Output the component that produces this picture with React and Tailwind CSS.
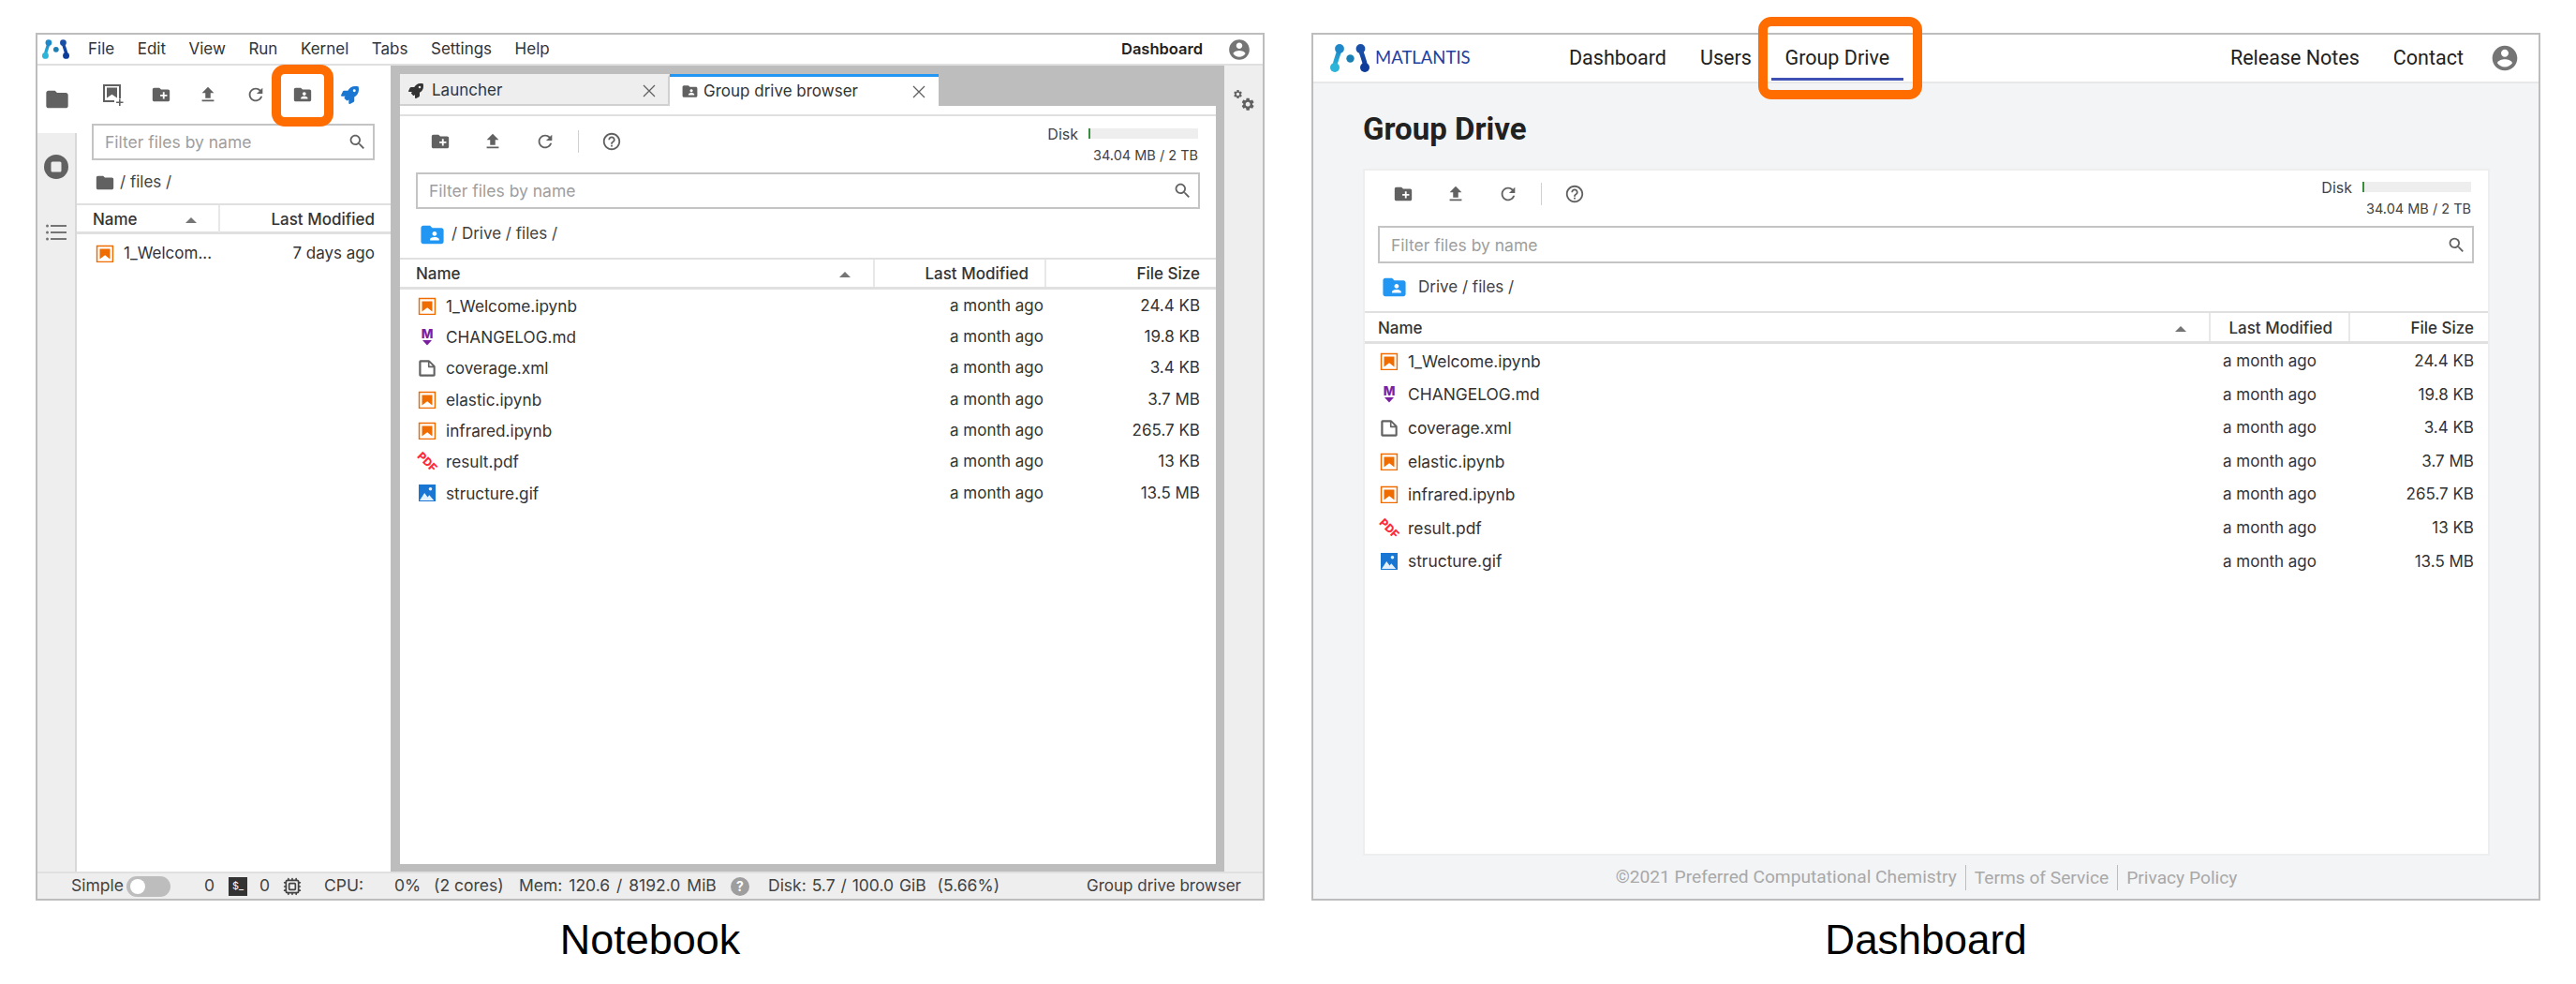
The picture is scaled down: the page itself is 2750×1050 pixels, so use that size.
import React from "react";
import { Cpu } from "lucide-react";
import { FaRocket } from "react-icons/fa";

const P = {
  folder: "M10 4H4c-1.1 0-1.99.9-1.99 2L2 18c0 1.1.9 2 2 2h16c1.1 0 2-.9 2-2V8c0-1.1-.9-2-2-2h-8l-2-2z",
  newFolder: "M20 6h-8l-2-2H4c-1.11 0-1.99.89-1.99 2L2 18c0 1.11.89 2 2 2h16c1.11 0 2-.89 2-2V8c0-1.11-.89-2-2-2zm-1 8h-3v3h-2v-3h-3v-2h3V9h2v3h3v2z",
  upload: "M9 16h6v-6h4l-7-7-7 7h4zm-4 2h14v2H5z",
  refresh: "M17.65 6.35C16.2 4.9 14.21 4 12 4c-4.42 0-7.99 3.58-7.99 8s3.57 8 7.99 8c3.73 0 6.84-2.55 7.73-6h-2.08c-.82 2.33-3.04 4-5.65 4-3.31 0-6-2.69-6-6s2.69-6 6-6c1.66 0 3.14.69 4.22 1.78L13 11h7V4l-2.35 2.35z",
  shared: "M20 6h-8l-2-2H4c-1.1 0-2 .9-2 2v12c0 1.1.9 2 2 2h16c1.1 0 2-.9 2-2V8c0-1.1-.9-2-2-2zm-6 3c1.1 0 2 .9 2 2s-.9 2-2 2-2-.9-2-2 .9-2 2-2zm4 8h-8v-1c0-1.33 2.67-2 4-2s4 .67 4 2v1z",
  search: "M15.5 14h-.79l-.28-.27C15.41 12.59 16 11.11 16 9.5 16 5.91 13.09 3 9.5 3S3 5.91 3 9.5 5.91 16 9.5 16c1.61 0 3.09-.59 4.23-1.57l.27.28v.79l5 4.99L20.49 19l-4.99-5zm-6 0C7.01 14 5 11.99 5 9.5S7.01 5 9.5 5 14 7.01 14 9.5 11.99 14 9.5 14z",
  help: "M11 18h2v-2h-2v2zm1-16C6.48 2 2 6.48 2 12s4.48 10 10 10 10-4.48 10-10S17.52 2 12 2zm0 18c-4.41 0-8-3.59-8-8s3.59-8 8-8 8 3.59 8 8-3.59 8-8 8zm0-14c-2.21 0-4 1.79-4 4h2c0-1.1.9-2 2-2s2 .9 2 2c0 2-3 1.75-3 5h2c0-2.25 3-2.5 3-5 0-2.21-1.79-4-4-4z",
  account: "M12 2C6.48 2 2 6.48 2 12s4.48 10 10 10 10-4.48 10-10S17.52 2 12 2zm0 3c1.66 0 3 1.34 3 3s-1.34 3-3 3-3-1.34-3-3 1.34-3 3-3zm0 14.2c-2.5 0-4.71-1.28-6-3.22.03-1.99 4-3.08 6-3.08 1.99 0 5.97 1.09 6 3.08-1.29 1.94-3.5 3.22-6 3.22z",
  gear: "M19.14 12.94c.04-.3.06-.61.06-.94 0-.32-.02-.64-.07-.94l2.03-1.58c.18-.14.23-.41.12-.61l-1.92-3.32c-.12-.22-.37-.29-.59-.22l-2.39.96c-.5-.38-1.03-.7-1.62-.94l-.36-2.54c-.04-.24-.24-.41-.48-.41h-3.84c-.24 0-.43.17-.47.41l-.36 2.54c-.59.24-1.13.57-1.62.94l-2.39-.96c-.22-.08-.47 0-.59.22L2.74 8.87c-.12.21-.08.47.12.61l2.03 1.58c-.05.3-.09.63-.09.94s.02.64.07.94l-2.03 1.58c-.18.14-.23.41-.12.61l1.92 3.32c.12.22.37.29.59.22l2.39-.96c.5.38 1.03.7 1.62.94l.36 2.54c.05.24.24.41.48.41h3.84c.24 0 .44-.17.47-.41l.36-2.54c.59-.24 1.13-.56 1.62-.94l2.39.96c.22.08.47 0 .59-.22l1.92-3.32c.12-.22.07-.47-.12-.61l-2.01-1.58zM12 15.6c-1.98 0-3.6-1.62-3.6-3.6s1.62-3.6 3.6-3.6 3.6 1.62 3.6 3.6-1.62 3.6-3.6 3.6z",
};

const Icon = ({ d, className = "w-5 h-5 text-[#616161]" }) => (
  <svg viewBox="0 0 24 24" fill="currentColor" className={className}>
    <path d={d} />
  </svg>
);

const CloseIcon = () => (
  <svg viewBox="0 0 14 14" className="w-[14px] h-[14px] text-[#616161]" stroke="currentColor" strokeWidth="1.3" fill="none">
    <path d="M1 1l12 12M13 1L1 13" />
  </svg>
);

const SortArrow = () => (
  <svg viewBox="0 0 12 6" className="w-[12px] h-[6px] fill-[#757575]">
    <path d="M6 0l6 6H0z" />
  </svg>
);

const Logo = ({ className }) => (
  <svg viewBox="0 0 42 30" className={className}>
    <defs>
      <linearGradient id="logoLeft" x1="0" y1="0" x2="0" y2="1">
        <stop offset="0" stopColor="#1e88c9" />
        <stop offset="1" stopColor="#2cb5d8" />
      </linearGradient>
      <linearGradient id="logoRight" x1="0" y1="0" x2="0" y2="1">
        <stop offset="0" stopColor="#1a4fa8" />
        <stop offset="1" stopColor="#0d3c9a" />
      </linearGradient>
    </defs>
    <path d="M10 5c-.6 7-4.5 10-5 20" stroke="url(#logoLeft)" strokeWidth="5" fill="none" strokeLinecap="round" />
    <circle cx="10" cy="5" r="4.9" fill="#1e88c9" />
    <circle cx="5" cy="25" r="5" fill="#2cb5d8" />
    <circle cx="21.5" cy="15.5" r="4.2" fill="#1b7fb3" />
    <path d="M32.5 5c.6 7 4.5 10 5 20" stroke="url(#logoRight)" strokeWidth="5" fill="none" strokeLinecap="round" />
    <circle cx="32.5" cy="5" r="4.9" fill="#1a4fa8" />
    <circle cx="37" cy="25" r="5" fill="#0d3c9a" />
  </svg>
);

const NotebookIcon = () => (
  <svg viewBox="0 0 22 22" className="w-[22px] h-[22px] fill-[#ef6c00]">
    <path d="M18.7 3.3v15.4H3.3V3.3h15.4m1.5-1.5H1.8v18.3h18.3l.1-18.3z" />
    <path d="M16.5 16.5l-5.4-4.3-5.6 4.3v-11h11z" />
  </svg>
);

const MarkdownIcon = () => (
  <svg viewBox="0 0 22 22" className="w-[22px] h-[22px]">
    <text x="11" y="12" textAnchor="middle" fontSize="13.5" fontWeight="800" fontFamily="Inter, sans-serif" fill="#7b1fa2">M</text>
    <path d="M6 14h10l-5 5.5z" fill="#7b1fa2" />
  </svg>
);

const FileIcon = () => (
  <svg viewBox="0 0 22 22" className="w-[22px] h-[22px] fill-[#616161]">
    <path d="M19.3 8.2l-5.5-5.5c-.3-.3-.7-.5-1.2-.5H3.9c-.8.1-1.6.9-1.6 1.8v14.1c0 .9.7 1.6 1.6 1.6h14.2c.9 0 1.6-.7 1.6-1.6V9.4c.1-.5-.1-.9-.4-1.2zm-5.8-3.3l3.4 3.6h-3.4V5zm3.9 12.7H4.7c-.1 0-.2 0-.2-.2V4.7c0-.2.1-.3.2-.3h7.2v4.4s0 .8.3 1.1c.3.3 1.1.3 1.1.3h4.3v7.2s-.1.2-.2.2z" />
  </svg>
);

const PdfIcon = () => (
  <svg viewBox="0 0 22 22" className="w-[22px] h-[22px] overflow-visible">
    <text x="11" y="15" textAnchor="middle" fontSize="12" fontWeight="800" fontFamily="Inter, sans-serif" fill="#ff2a3a" transform="rotate(45 11 11)">PDF</text>
  </svg>
);

const ImageIcon = () => (
  <svg viewBox="0 0 22 22" className="w-[22px] h-[22px]">
    <rect x="2" y="2" width="18" height="18" fill="#1976d2" />
    <circle cx="14.5" cy="6.8" r="1.8" fill="#e3f2fd" />
    <path d="M3 19l5.2-8 3.3 4.5 1.8-2.2 4.9 5.7z" fill="#e3f2fd" />
  </svg>
);

const LauncherAddIcon = () => (
  <svg viewBox="0 0 24 24" className="w-[24px] h-[24px] fill-[#616161]">
    <path d="M1 1h19v15h-2V3H3v15h10v2H1z" />
    <path d="M5 4.5h11v11l-5.5-3.7L5 15.5z" />
    <path d="M18 16.5h1.6v2.9H22.5V21h-2.9v2.9H18V21h-2.9v-1.6H18z" />
  </svg>
);

const GearsIcon = () => (
  <svg viewBox="0 0 24 24" className="w-[24px] h-[24px] fill-[#616161]">
    <g transform="scale(0.46)">
      <path d={P.gear} />
    </g>
    <g transform="translate(8 8) scale(0.68)">
      <path d={P.gear} />
    </g>
  </svg>
);

const files = [
  { name: "1_Welcome.ipynb", size: "24.4 KB", Ico: NotebookIcon },
  { name: "CHANGELOG.md", size: "19.8 KB", Ico: MarkdownIcon },
  { name: "coverage.xml", size: "3.4 KB", Ico: FileIcon },
  { name: "elastic.ipynb", size: "3.7 MB", Ico: NotebookIcon },
  { name: "infrared.ipynb", size: "265.7 KB", Ico: NotebookIcon },
  { name: "result.pdf", size: "13 KB", Ico: PdfIcon },
  { name: "structure.gif", size: "13.5 MB", Ico: ImageIcon },
];

const FilterBox = ({ className }) => (
  <div className={`flex items-center border-2 border-[#c4c4c4] bg-white ${className}`}>
    <input
      placeholder="Filter files by name"
      className="flex-1 min-w-0 h-full pl-3 outline-none leading-none text-[17.5px] text-[#333] placeholder:text-[#9e9e9e]"
    />
    <Icon d={P.search} className="w-[21px] h-[21px] mr-[6px] text-[#616161]" />
  </div>
);

const DriveBrowser = ({ c, crumb }) => (
  <div className="flex-1 flex flex-col bg-white font-[Inter,sans-serif] text-[#333] min-h-0">
    <div className={`flex justify-between ${c.toolbar}`}>
      <div className={`flex items-center ${c.btn}`}>
        {[P.newFolder, P.upload, P.refresh].map((d) => (
          <div key={d} className="w-14 flex justify-center">
            <Icon d={d} className="w-[22px] h-[22px] text-[#616161]" />
          </div>
        ))}
        <div className="w-px h-6 bg-[#d0d0d0] ml-[7px]" />
        <div className="w-14 flex justify-center ml-[7px]">
          <Icon d={P.help} className="w-[22px] h-[22px] text-[#616161]" />
        </div>
      </div>
      <div className={`flex flex-col items-end ${c.disk}`}>
        <div className="flex items-center gap-[11px] h-[11px]">
          <span className="text-[16px] text-[#424242]">Disk</span>
          <div className={`h-[11px] bg-[#eeeeee] ${c.bar}`}>
            <div className="w-[2px] h-full bg-[#388e3c]" />
          </div>
        </div>
        <span className="text-[14.5px] text-[#424242] mt-[8px] leading-[20px]">34.04 MB / 2 TB</span>
      </div>
    </div>
    <FilterBox className={c.filter} />
    <div className={`flex items-center text-[17px] text-[#424242] ${c.crumb}`}>
      <Icon d={P.shared} className="w-[29px] h-[29px] text-[#2196f3]" />
      <span className={c.crumbText}>{crumb}</span>
    </div>
    <div className={`grid border-t-2 border-b-[3px] border-[#e0e0e0] text-[17px] font-medium ${c.grid} ${c.head}`}>
      <div className={`flex items-center justify-between pr-[24px] pt-[3px] ${c.namePad}`}>
        <span>Name</span>
        <SortArrow />
      </div>
      <div className="flex items-center justify-end border-l-2 border-[#e8e8e8] pr-[17px] pt-[3px]">Last Modified</div>
      <div className={`flex items-center justify-end border-l-2 border-[#e8e8e8] pt-[3px] ${c.sizePad}`}>File Size</div>
    </div>
    {files.map(({ name, size, Ico }) => (
      <div key={name} className={`grid items-center text-[17px] pt-[2px] ${c.grid} ${c.row}`}>
        <div className={`flex items-center ${c.rowName}`}>
          <Ico />
          <span className={c.nameText}>{name}</span>
        </div>
        <div className={`text-right ${c.modPad}`}>a month ago</div>
        <div className={`text-right ${c.sizePad}`}>{size}</div>
      </div>
    ))}
  </div>
);

const nbConfig = {
  toolbar: "h-[60px] pl-[15px] pr-[19px]",
  btn: "h-[54px]",
  disk: "pt-[13px]",
  bar: "w-[117px]",
  filter: "mx-[17px] h-[39px] shrink-0",
  crumb: "h-[52px] pl-[20px] pt-[2px]",
  crumbText: "ml-[6px]",
  grid: "grid-cols-[505px_183px_183px]",
  head: "h-[34px]",
  row: "h-[33.3px]",
  namePad: "pl-[17px]",
  sizePad: "pr-[17px]",
  rowName: "pl-[18px] gap-[9px]",
  nameText: "text-[17.2px]",
  modPad: "pr-px",
};

const dashConfig = {
  toolbar: "h-[59px] pl-[13px] pr-[18px]",
  btn: "h-[50px]",
  disk: "pt-[12px]",
  bar: "w-[116px]",
  filter: "ml-[14px] mr-[15px] h-[40px] shrink-0",
  crumb: "h-[51px] pl-[17px]",
  crumbText: "ml-[11px]",
  grid: "grid-cols-[901px_149px_149px]",
  head: "h-[35px]",
  row: "h-[35.6px]",
  namePad: "pl-[14px]",
  sizePad: "pr-[15px]",
  rowName: "pl-[15px] gap-[9px]",
  nameText: "text-[17.4px]",
  modPad: "pr-[34px]",
};

const NotebookWindow = () => (
  <div className="w-[1312px] h-[926px] border-2 border-[#bdbdbd] flex flex-col font-[Inter,sans-serif] text-[#333]">
    <div className="h-[33px] shrink-0 flex items-center border-b-2 border-[#e0e0e0] text-[17px] pr-[12px]">
      <Logo className="w-[29px] h-[21px] ml-[5px]" />
      <div className="flex gap-[24.5px] ml-[20px]">
        {["File", "Edit", "View", "Run", "Kernel", "Tabs", "Settings", "Help"].map((m) => (
          <span key={m}>{m}</span>
        ))}
      </div>
      <span className="ml-auto font-semibold text-[16.5px] text-[#212121]">Dashboard</span>
      <Icon d={P.account} className="w-[26px] h-[26px] ml-[26px] text-[#757575]" />
    </div>
    <div className="flex-1 flex min-h-0">
      <div className="w-[42px] shrink-0 flex flex-col bg-[#eeeeee] border-r-2 border-[#d8d8d8]">
        <div className="h-[72px] bg-white -mr-[2px] flex items-center justify-center">
          <Icon d={P.folder} className="w-[28px] h-[28px] text-[#616161]" />
        </div>
        <div className="h-[71px] flex items-center justify-center">
          <svg viewBox="0 0 26 26" className="w-[26px] h-[26px]">
            <circle cx="13" cy="13" r="13" fill="#616161" />
            <rect x="7.5" y="7.5" width="11" height="11" rx="1.5" fill="#eeeeee" />
          </svg>
        </div>
        <div className="h-[70px] flex items-center justify-center">
          <svg viewBox="0 0 22 18" className="w-[22px] h-[18px] fill-[#757575]">
            <circle cx="1.5" cy="2" r="1.5" /><rect x="5" y="1" width="17" height="2" />
            <circle cx="1.5" cy="9" r="1.5" /><rect x="5" y="8" width="17" height="2" />
            <circle cx="1.5" cy="16" r="1.5" /><rect x="5" y="15" width="17" height="2" />
          </svg>
        </div>
      </div>
      <div className="w-[335px] shrink-0 flex flex-col bg-white">
        <div className="h-[62px] shrink-0 flex items-center pl-[14px]">
          <div className="w-[50px] flex justify-center"><LauncherAddIcon /></div>
          <div className="w-[51px] flex justify-center"><Icon d={P.newFolder} className="w-[22px] h-[22px] text-[#616161]" /></div>
          <div className="w-[50px] flex justify-center"><Icon d={P.upload} className="w-[22px] h-[22px] text-[#616161]" /></div>
          <div className="w-[51px] flex justify-center"><Icon d={P.refresh} className="w-[22px] h-[22px] text-[#616161]" /></div>
          <div className="w-[50px] flex justify-center relative">
            <Icon d={P.shared} className="w-[22px] h-[22px] text-[#616161]" />
            <div className="absolute left-[-8px] top-[-21px] w-[66px] h-[66px] border-[10px] border-[#ff6d00] rounded-[14px]" />
          </div>
          <div className="w-[51px] flex justify-center"><FaRocket className="w-[19px] h-[19px] text-[#1976d2]" /></div>
        </div>
        <FilterBox className="ml-[16px] w-[302px] h-[39px] shrink-0" />
        <div className="h-[46px] shrink-0 flex items-center pl-[19px] pt-[2px] text-[17px] text-[#424242]">
          <Icon d={P.folder} className="w-[22px] h-[22px] text-[#616161]" />
          <span className="ml-[5px]">/ files /</span>
        </div>
        <div className="grid grid-cols-[151px_184px] h-[33px] border-t-2 border-b-[3px] border-[#e0e0e0] text-[17px] font-medium">
          <div className="flex items-center justify-between pl-[17px] pr-[23px] pt-[3px]">
            <span>Name</span>
            <SortArrow />
          </div>
          <div className="flex items-center justify-end border-l-2 border-[#e8e8e8] pr-[17px] pt-[3px]">Last Modified</div>
        </div>
        <div className="mt-[4px] h-[34px] flex items-center justify-between text-[17px] pl-[19px] pr-[17px]">
          <div className="flex items-center gap-[9px]">
            <NotebookIcon />
            <span>1_Welcom...</span>
          </div>
          <span>7 days ago</span>
        </div>
      </div>
      <div className="flex-1 flex flex-col bg-[#bdbdbd] pl-[10px] pr-[9px] pt-[9px] pb-[8px] min-w-0">
        <div className="h-[34px] shrink-0 flex text-[17px]">
          <div className="w-[288px] bg-[#eeeeee] border-t-[3px] border-t-[#eeeeee] border-b-2 border-r-2 border-b-[#d0d0d0] border-r-[#d0d0d0] flex items-center pl-[9px] pr-[13px]">
            <FaRocket className="w-[16px] h-[16px] text-[#333]" />
            <span className="ml-[9px] flex-1">Launcher</span>
            <CloseIcon />
          </div>
          <div className="w-[287px] bg-white border-t-[3px] border-[#2196f3] flex items-center pl-[12px] pr-[14px]">
            <Icon d={P.shared} className="w-[19px] h-[19px] text-[#616161]" />
            <span className="ml-[5px] flex-1">Group drive browser</span>
            <CloseIcon />
          </div>
        </div>
        <div className="h-[11px] shrink-0 bg-white border-b-2 border-[#e0e0e0]" />
        <DriveBrowser c={nbConfig} crumb="/ Drive / files /" />
      </div>
      <div className="w-[41px] shrink-0 bg-[#eeeeee] flex justify-center pt-[25px]">
        <GearsIcon />
      </div>
    </div>
    <div className="h-[29px] shrink-0 flex items-center bg-[#eeeeee] text-[17.5px] text-[#424242] border-t-2 border-[#e0e0e0]">
      <span className="ml-[36px] w-[52px]">Simple</span>
      <div className="w-[47px] h-[22px] rounded-full bg-[#bdbdbd] flex items-center ml-[7px]">
        <div className="w-[16px] h-[16px] rounded-full bg-white ml-[4px]" />
      </div>
      <span className="ml-[36px] w-[10px]">0</span>
      <div className="w-[20px] h-[20px] bg-[#333] text-white text-[11px] flex items-center justify-center ml-[16px]">$_</div>
      <span className="ml-[13px] w-[10px]">0</span>
      <Cpu className="w-[20px] h-[20px] ml-[15px] text-[#424242]" />
      <span className="ml-[24px] w-[75px]">CPU:</span>
      <span className="w-[42px]">0%</span>
      <span className="w-[91px]">(2 cores)</span>
      <span className="w-[226px] [word-spacing:2px]">Mem: 120.6 / 8192.0 MiB</span>
      <div className="w-[20px] h-[20px] rounded-full bg-[#9e9e9e] text-white text-[14px] font-bold flex items-center justify-center">?</div>
      <span className="ml-[20px] [word-spacing:1px]">Disk: 5.7 / 100.0 GiB&nbsp;&nbsp;(5.66%)</span>
      <span className="ml-auto mr-[23px] text-[17px]">Group drive browser</span>
    </div>
  </div>
);

const DashboardWindow = () => (
  <div className="w-[1312px] h-[926px] border-2 border-[#bdbdbd] flex flex-col font-[Roboto,sans-serif] text-[#212121] bg-[#f3f4f6]">
    <div className="h-[52px] shrink-0 flex items-center bg-white border-b-2 border-[#e8e8e8] text-[21.5px]">
      <Logo className="w-[42px] h-[30px] ml-[18px]" />
      <span className="ml-[6px] text-[18.5px] text-[#1f409f] font-[Lato,sans-serif] w-[207px]">MATLANTIS</span>
      <span>Dashboard</span>
      <span className="ml-[36px]">Users</span>
      <div className="relative ml-[21px] w-[141px] h-full flex items-center justify-center">
        <span>Group Drive</span>
        <div className="absolute left-0 right-0 bottom-[1px] h-[3px] bg-[#3f51b5]" />
        <div className="absolute left-[-14px] top-[-19px] w-[175px] h-[88px] border-[10px] border-[#ff6d00] rounded-[14px]" />
      </div>
      <span className="ml-auto">Release Notes</span>
      <span className="ml-[36px]">Contact</span>
      <Icon d={P.account} className="w-[32px] h-[32px] ml-[28px] mr-[20px] text-[#757575]" />
    </div>
    <div className="flex-1 flex flex-col min-h-0 pl-[53px] pr-[52px]">
      <div className="h-[91px] shrink-0 flex items-center pt-[6px] text-[33px] font-bold text-[#212121]">Group Drive</div>
      <div className="flex-1 flex flex-col min-h-0 border-2 border-[#eeeeee] bg-white">
        <DriveBrowser c={dashConfig} crumb="Drive / files /" />
      </div>
      <div className="h-[46px] shrink-0 flex items-center justify-center text-[19.2px] text-[#a8a8a8]">
        <span className="pr-[9px]">©2021 Preferred Computational Chemistry</span>
        <span className="px-[9px] border-l border-[#bdbdbd] h-[27px] leading-[27px]">Terms of Service</span>
        <span className="pl-[9px] border-l border-[#bdbdbd] h-[27px] leading-[27px]">Privacy Policy</span>
      </div>
    </div>
  </div>
);

export default function App() {
  return (
    <div className="w-[2750px] h-[1050px] bg-white flex gap-[50px] pl-[38px] pt-[35px] overflow-hidden">
      <div className="flex flex-col">
        <NotebookWindow />
        <div className="text-center text-[45px] leading-[60px] mt-[12px] text-black font-['Liberation_Sans',sans-serif]">Notebook</div>
      </div>
      <div className="flex flex-col">
        <DashboardWindow />
        <div className="text-center text-[44px] leading-[60px] mt-[12px] text-black font-['Liberation_Sans',sans-serif]">Dashboard</div>
      </div>
    </div>
  );
}
